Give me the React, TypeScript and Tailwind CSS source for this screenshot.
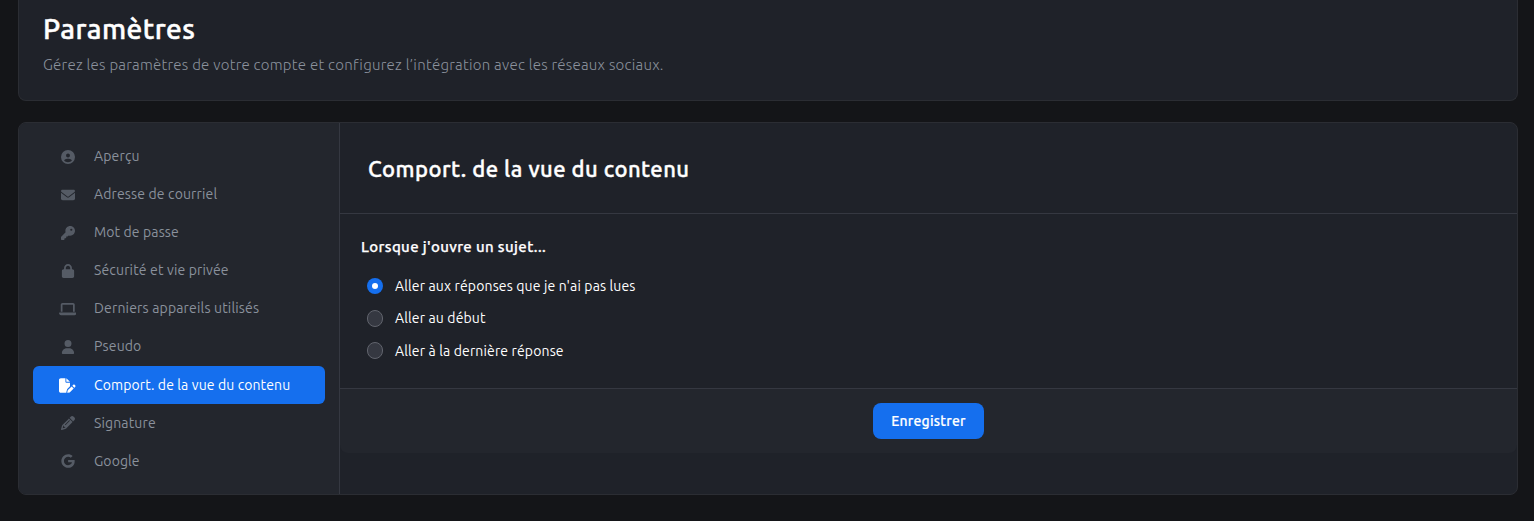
import React from 'react';
import {
  FaCircleUser,
  FaEnvelope,
  FaKey,
  FaLock,
  FaLaptop,
  FaUser,
  FaFilePen,
  FaPencil,
  FaGoogle
} from 'react-icons/fa6';

const App: React.FC = () => {
  const navItems = [
    { label: 'Aperçu', icon: FaCircleUser, size: 'mt-px size-3.5', tracking: 'tracking-[0.15px]' },
    { label: 'Adresse de courriel', icon: FaEnvelope, size: 'mt-px size-3.5', tracking: 'tracking-[0.14px]' },
    { label: 'Mot de passe', icon: FaKey, size: 'mt-px size-3.5', tracking: 'tracking-[0.12px]' },
    { label: 'Sécurité et vie privée', icon: FaLock, size: 'mt-px size-3.5', tracking: 'tracking-[0.15px]' },
    { label: 'Derniers appareils utilisés', icon: FaLaptop, size: 'mt-px h-3.5 w-[17.5px]', tracking: 'tracking-[0.17px]' },
    { label: 'Pseudo', icon: FaUser, size: 'mt-px size-3.5', tracking: 'tracking-[0.15px]' },
    { label: 'Comport. de la vue du contenu', icon: FaFilePen, size: 'h-[15px] w-[16.5px]', tracking: 'tracking-[0.11px]', active: true },
    { label: 'Signature', icon: FaPencil, size: 'size-3.5', tracking: 'tracking-[0.14px]' },
    { label: 'Google', icon: FaGoogle, size: 'size-3.5', tracking: 'tracking-[0.08px]' }
  ];

  const options = [
    { label: "Aller aux réponses que je n'ai pas lues", checked: true },
    { label: 'Aller au début', checked: false },
    { label: 'Aller à la dernière réponse', checked: false }
  ];

  return (
    <div className="h-[521px] overflow-hidden bg-[#141518] px-[18px] pr-4 font-['Ubuntu','Noto_Sans',sans-serif] text-white">
      {/* Header */}
      <div className="h-[101px] rounded-b-lg border border-t-0 border-[#2b2d33] bg-[#1f2229] px-6 pt-3">
        <h1 className="text-[28px] leading-[34px] font-medium tracking-[0.44px] [-webkit-text-stroke:0.5px]">Paramètres</h1>
        <p className="mt-2 text-[15px] leading-[22px] font-light tracking-[0.26px] text-[#8b929d]">
          Gérez les paramètres de votre compte et configurez l’intégration avec les réseaux sociaux.
        </p>
      </div>

      <div className="mt-[21px] flex h-[373px] overflow-hidden rounded-lg border border-[#2b2d33] bg-[#1f2229]">
        {/* Sidebar */}
        <nav className="w-[321px] shrink-0 border-r border-[#353841] bg-[#23262d] p-3.5">
          {navItems.map((item) => (
            <a
              key={item.label}
              className={`flex h-[38px] items-center rounded-md pl-[25px] text-sm ${
                item.active ? 'mt-px bg-[#156fee] text-white' : 'text-[#8a919c]'
              }`}
            >
              <span className={`flex w-[19px] justify-center ${item.active ? 'text-white' : 'text-[#555b65]'}`}>
                <item.icon className={`shrink-0 ${item.size}`} />
              </span>
              <span className={`ml-[17px] whitespace-nowrap ${item.tracking}`}>{item.label}</span>
            </a>
          ))}
        </nav>

        {/* Content */}
        <div className="flex-1">
          <div className="flex h-[91px] items-center border-b border-[#353841] px-7 pt-0.5">
            <h2 className="text-[22px] leading-7 font-medium tracking-[0.45px] [-webkit-text-stroke:0.4px]">
              Comport. de la vue du contenu
            </h2>
          </div>
          <div className="h-[175px] border-b border-[#353841] px-[21px] pt-[22px]">
            <h3 className="text-[15px] leading-[22px] font-medium tracking-[0.36px] [-webkit-text-stroke:0.25px]">
              Lorsque j'ouvre un sujet...
            </h3>
            <div className="mt-3 px-1.5">
              {options.map((option) => (
                <label key={option.label} className="flex h-[32.3px] items-center text-sm">
                  {option.checked ? (
                    <span className="flex size-4 items-center justify-center rounded-full bg-[#156fee]">
                      <span className="size-1.5 rounded-full bg-white" />
                    </span>
                  ) : (
                    <span className="h-[17px] w-4 rounded-full border border-[#61646d] bg-[#353841]" />
                  )}
                  <span className="ml-3 tracking-[0.14px]">{option.label}</span>
                </label>
              ))}
            </div>
          </div>
          <div className="flex h-16 items-center justify-center rounded-b-lg bg-[#23262d]">
            <button className="h-9 w-[111px] rounded-lg bg-[#156fee] text-sm font-medium tracking-[0.24px] [-webkit-text-stroke:0.2px]">
              Enregistrer
            </button>
          </div>
        </div>
      </div>
    </div>
  );
};

export default App;
